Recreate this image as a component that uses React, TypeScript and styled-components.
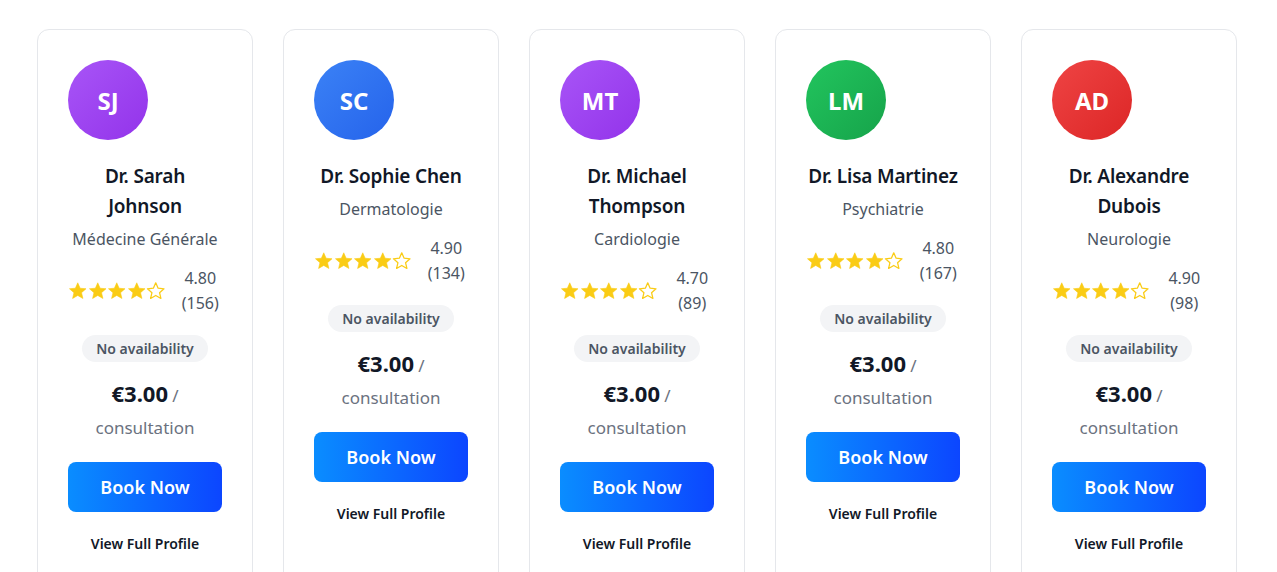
import React from "react";
import styled, { createGlobalStyle } from "styled-components";

const GlobalStyle = createGlobalStyle`
  html, body { margin: 0; padding: 0; background: #ffffff; }
  body { font-family: "Noto Sans", "Open Sans", sans-serif; color: #111827; }
  * { box-sizing: border-box; }
`;

const Page = styled.div`
  padding: 29px 0 0 37px;
`;

const Grid = styled.div`
  width: 1200px;
  display: grid;
  grid-template-columns: repeat(5, 216px);
  gap: 30px;
`;

const Card = styled.div`
  background: #ffffff;
  border: 1px solid #e5e7eb;
  border-radius: 12px;
  padding: 30px 30px 30px;
  display: flex;
  flex-direction: column;
  align-items: center;
  text-align: center;
`;

const Avatar = styled.div<{ $from: string; $to: string }>`
  align-self: flex-start;
  width: 80px;
  height: 80px;
  border-radius: 50%;
  background: linear-gradient(135deg, ${(p) => p.$from}, ${(p) => p.$to});
  color: #ffffff;
  font-size: 24px;
  font-weight: 700;
  display: flex;
  align-items: center;
  justify-content: center;
  margin-bottom: 21px;
`;

const Name = styled.h3`
  margin: 0;
  font-size: 19px;
  font-weight: 600;
  line-height: 30px;
  color: #111827;
  letter-spacing: -0.2px;
`;

const Specialty = styled.div`
  margin-top: 6px;
  font-size: 16px;
  line-height: 24px;
  color: #4b5563;
`;

const RatingRow = styled.div`
  margin-top: 15px;
  width: 100%;
  display: flex;
  align-items: center;
  justify-content: center;
  gap: 13px;
`;

const Stars = styled.div`
  display: flex;
  flex-shrink: 0;
`;

const RatingText = styled.span`
  font-size: 16px;
  line-height: 25px;
  color: #4b5563;
`;

const Badge = styled.span`
  margin-top: 19px;
  display: inline-block;
  background: #f3f4f6;
  color: #4b5563;
  font-size: 14px;
  font-weight: 600;
  line-height: 19px;
  padding: 4px 14px;
  border-radius: 999px;
`;

const Price = styled.div`
  margin-top: 18px;
  line-height: 32px;
`;

const Amount = styled.span`
  font-size: 22px;
  font-weight: 700;
  line-height: 1;
  color: #111827;
`;

const Per = styled.span`
  font-size: 17px;
  line-height: 1;
  color: #6b7280;
`;

const BookButton = styled.button`
  margin-top: 18px;
  width: 100%;
  height: 50px;
  border: none;
  border-radius: 8px;
  background: linear-gradient(90deg, #0a8dff 0%, #0c46ff 100%);
  color: #ffffff;
  font-family: inherit;
  font-size: 18px;
  font-weight: 600;
  cursor: pointer;
`;

const ProfileLink = styled.a`
  margin-top: 21px;
  font-size: 14px;
  font-weight: 600;
  line-height: 21px;
  color: #111827;
  text-decoration: none;
`;

const StarIcon = ({ filled }: { filled: boolean }) => (
  <svg width="19.5" height="20" viewBox="0 0 20 20">
    <path
      d="M10 1.6l2.45 5.55 6.05.55-4.6 4 1.38 5.95L10 14.55l-5.28 3.1 1.38-5.95-4.6-4 6.05-.55z"
      fill={filled ? "#facc15" : "#ffffff"}
      stroke="#facc15"
      strokeWidth={filled ? 0.6 : 1.3}
      strokeLinejoin="round"
    />
  </svg>
);

type Doctor = {
  initials: string;
  from: string;
  to: string;
  name: string;
  specialty: string;
  rating: string;
  count: number;
};

const doctors: Doctor[] = [
  { initials: "SJ", from: "#a855f7", to: "#9333ea", name: "Dr. Sarah Johnson", specialty: "Médecine Générale", rating: "4.80", count: 156 },
  { initials: "SC", from: "#3b82f6", to: "#2563eb", name: "Dr. Sophie Chen", specialty: "Dermatologie", rating: "4.90", count: 134 },
  { initials: "MT", from: "#a855f7", to: "#9333ea", name: "Dr. Michael Thompson", specialty: "Cardiologie", rating: "4.70", count: 89 },
  { initials: "LM", from: "#22c55e", to: "#16a34a", name: "Dr. Lisa Martinez", specialty: "Psychiatrie", rating: "4.80", count: 167 },
  { initials: "AD", from: "#ef4444", to: "#dc2626", name: "Dr. Alexandre Dubois", specialty: "Neurologie", rating: "4.90", count: 98 },
];

export default function App() {
  return (
    <>
      <GlobalStyle />
      <Page>
        <Grid>
          {doctors.map((d) => (
            <Card key={d.initials + d.name}>
              <Avatar $from={d.from} $to={d.to}>{d.initials}</Avatar>
              <Name>{d.name}</Name>
              <Specialty>{d.specialty}</Specialty>
              <RatingRow>
                <Stars>
                  {[0, 1, 2, 3, 4].map((i) => (
                    <StarIcon key={i} filled={i < 4} />
                  ))}
                </Stars>
                <RatingText>
                  {d.rating} ({d.count})
                </RatingText>
              </RatingRow>
              <Badge>No availability</Badge>
              <Price>
                <Amount>€3.00</Amount> <Per>/</Per> <Per>consultation</Per>
              </Price>
              <BookButton>Book Now</BookButton>
              <ProfileLink href="#">View Full Profile</ProfileLink>
            </Card>
          ))}
        </Grid>
      </Page>
    </>
  );
}
